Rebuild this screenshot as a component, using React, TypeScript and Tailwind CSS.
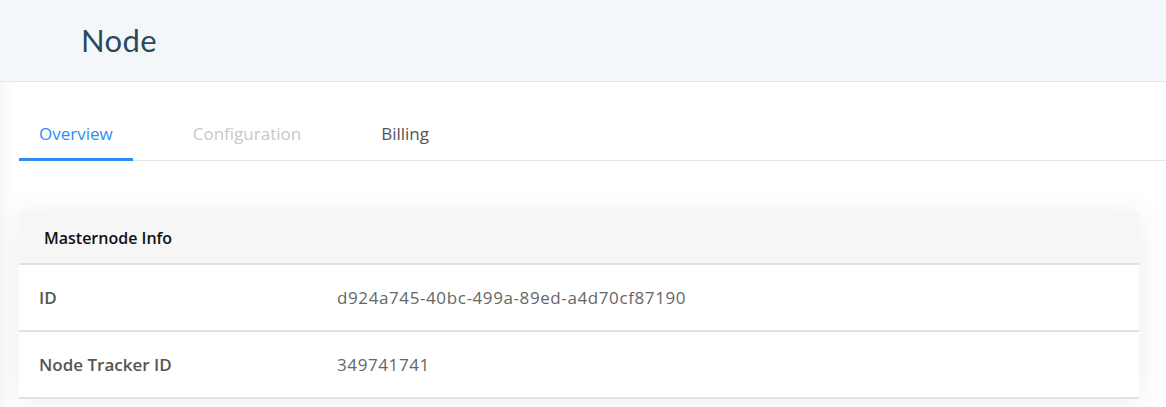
import { useState } from 'react'

const tabs = ['Overview', 'Configuration', 'Billing']

const rows = [
  { label: 'ID', value: 'd924a745-40bc-499a-89ed-a4d70cf87190' },
  { label: 'Node Tracker ID', value: '349741741' },
]

export default function App() {
  const [tab, setTab] = useState('Overview')

  return (
    <div className="h-screen overflow-hidden bg-white font-['Open_Sans','Lato',sans-serif]">
      <div className="h-[82px] bg-[#f4f7fa] border-b border-[#e4e8ec] flex items-center pl-[81px]">
        <h1 className="text-[31px] text-[#2a4a5c] leading-none font-['Lato',sans-serif] tracking-[0.4px]">Node</h1>
      </div>

      <div className="shadow-[inset_18px_0_16px_-16px_rgba(0,0,0,0.06)] pt-[27px] pb-[40px]">
        <div className="ml-[19px] flex border-b border-[#e6e6e6]">
          {tabs.map(t => (
            <button key={t} onClick={() => t !== 'Configuration' && setTab(t)}
              className={`px-[20px] h-[52px] text-[17px] border-b-[3px] -mb-px mr-[40px] ${tab === t ? 'text-[#2a90f5] border-[#2a90f5]' : t === 'Configuration' ? 'text-[#c8c8c8] border-transparent cursor-not-allowed' : 'text-[#555] border-transparent'}`}>
              {t}
            </button>
          ))}
        </div>

        <div className="ml-[19px] mr-[27px] mt-[51px] bg-white shadow-[0_2px_28px_rgba(0,0,0,0.08)]">
          <div className="h-[53px] bg-[#f6f6f6] border-b-2 border-[#e2e2e2] flex items-center px-[25px]">
            <span className="text-[16px] font-semibold text-[#111]">Masternode Info</span>
          </div>
          {rows.map(r => (
            <div key={r.label} className="h-[67px] border-b-2 border-[#e2e2e4] flex items-center px-[20px]">
              <span className="w-[298px] text-[17px] font-semibold text-[#555]">{r.label}</span>
              <span className="text-[17px] text-[#666] tracking-[0.6px]">{r.value}</span>
            </div>
          ))}
        </div>
      </div>
    </div>
  )
}
